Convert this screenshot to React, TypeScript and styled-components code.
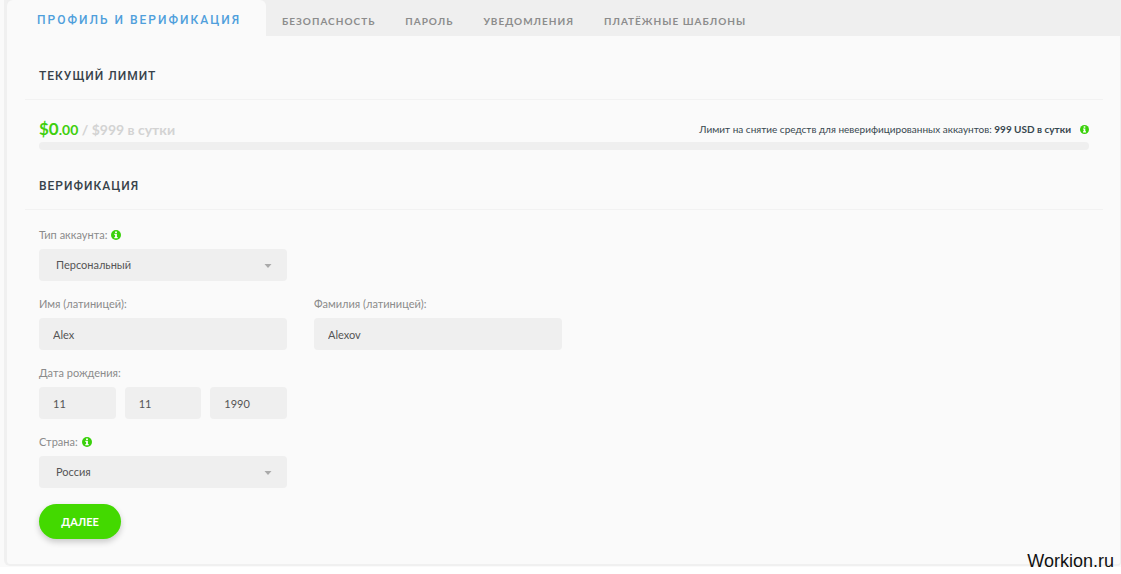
import React from "react";
import styled, { createGlobalStyle } from "styled-components";

const sans = 'Lato, "Noto Sans", sans-serif';
const display = 'Roboto, "Noto Sans", sans-serif';

const GlobalStyle = createGlobalStyle`
  *, *::before, *::after { box-sizing: border-box; }
  body { margin: 0; background: #fff; font-family: ${sans}; font-size: 11px; color: #37474f; }
`;

const Page = styled.div`
  position: relative;
  padding: 0 0 1px 4px;
  background: #fafafa;
`;

const Panel = styled.main`
  background: #fafafa;
  border: solid #f0f0f0;
  border-width: 0 1px 2px 3px;
  border-radius: 0 0 4px 6px;
  padding-bottom: 25px;
`;

const Tabs = styled.nav`
  display: flex;
  align-items: stretch;
  height: 36px;
  background: #efefef;
`;

const Tab = styled.a<{ $active?: boolean }>`
  display: flex;
  align-items: center;
  padding: ${p => (p.$active ? "4px 25px 0 30px" : "5px 15px 0")};
  margin-right: ${p => (p.$active ? "1px" : "0")};
  border-radius: ${p => (p.$active ? "6px 6px 0 0" : "0")};
  background: ${p => (p.$active ? "#fafafa" : "transparent")};
  color: ${p => (p.$active ? "#4f9fdc" : "#8c8c8c")};
  font: ${p => (p.$active ? `500 12px/16px ${display}` : `700 10px/16px ${sans}`)};
  letter-spacing: ${p => (p.$active ? "2px" : "1px")};
  text-decoration: none;
  white-space: nowrap;
`;

const Heading = styled.h2<{ $first?: boolean }>`
  margin: 0 17px 0 18px;
  padding: ${p => (p.$first ? "32px" : "28px")} 14px 15px;
  border-bottom: 1px solid #f2f2f2;
  font: 500 12px/16px ${display};
  letter-spacing: 1px;
  color: #37424a;
`;

const Section = styled.section`padding: 0 31px 0 32px;`;

const LimitRow = styled.div`
  display: flex;
  justify-content: space-between;
  align-items: center;
  padding-top: 17px;
  height: 42px;
`;

const Amount = styled.div`
  font: 700 14px/20px ${sans};
  color: #d3d3d3;
`;
const Used = styled.strong`font-weight: 700; color: #3fcf0e;`;
const Big = styled.span`font-size: 17px;`;

const Note = styled.div`
  display: flex;
  align-items: center;
  gap: 9px;
  padding-bottom: 1px;
  font: 400 10px/16px ${sans};
`;

const Bar = styled.div`height: 8px; border-radius: 4px; background: #efefef;`;

const Form = styled.form`
  display: grid;
  grid-template-columns: 248px 248px;
  column-gap: 27px;
  row-gap: 15px;
  padding: 17px 0 0 32px;
`;

const Field = styled.div`grid-column-start: 1;`;
const SideField = styled.div``;

const Label = styled.label`
  display: flex;
  align-items: center;
  gap: 4px;
  height: 16px;
  margin-bottom: 6px;
  font: 400 11px/16px ${sans};
  color: #8b8b8b;
`;

const Input = styled.input`
  display: block;
  width: 100%;
  height: 32px;
  padding: 0 14px;
  border: 0;
  border-radius: 4px;
  background: #efefef;
  color: #555;
  font: 400 11px/16px ${sans};
`;

const SelectBox = styled.div`position: relative;`;
const Select = styled.select`
  appearance: none;
  display: block;
  width: 100%;
  height: 32px;
  padding: 0 17px;
  border: 0;
  border-radius: 4px;
  background: #efefef;
  color: #555;
  font: 400 11px/16px ${sans};
`;
const Caret = styled.svg`position: absolute; right: 15px; top: 15px; pointer-events: none;`;

const DateGroup = styled.div`display: grid; grid-template-columns: repeat(3, 1fr); gap: 9px;`;

const Submit = styled.button`
  grid-column-start: 1;
  justify-self: start;
  width: 82px;
  height: 35px;
  margin-top: 1px;
  border: 0;
  border-radius: 18px;
  background: #43d900;
  box-shadow: 0 3px 6px rgba(0, 0, 0, 0.2);
  color: #fff;
  font: 700 11px/16px ${sans};
`;

const Watermark = styled.div`
  position: absolute;
  right: 7px;
  bottom: -4px;
  font: 400 18px/20px "Liberation Sans", sans-serif;
  color: #111;
`;

const InfoIcon = ({ size }: { size: number }) => (
  <svg width={size} height={size} viewBox="0 0 12 12" aria-hidden="true">
    <circle cx="6" cy="6" r="6" fill="#3ad10b" />
    <path d="M4.9 1.8h2.2v1.8H4.9zM4 4.5h3.1v3.9H8v1.5H4V8.4h.9V6H4z" fill="#fff" />
  </svg>
);

const Arrow = () => (
  <Caret width="8" height="5" viewBox="0 0 8 5" aria-hidden="true">
    <path d="M.5 0h7L4 4z" fill="#aaa" />
  </Caret>
);

export default function App() {
  return (
    <Page>
      <GlobalStyle />
      <Panel>
        <Tabs>
          <Tab href="#profile" $active>ПРОФИЛЬ И ВЕРИФИКАЦИЯ</Tab>
          <Tab href="#security">БЕЗОПАСНОСТЬ</Tab>
          <Tab href="#password">ПАРОЛЬ</Tab>
          <Tab href="#notifications">УВЕДОМЛЕНИЯ</Tab>
          <Tab href="#templates">ПЛАТЁЖНЫЕ ШАБЛОНЫ</Tab>
        </Tabs>
        <Heading $first>ТЕКУЩИЙ ЛИМИТ</Heading>
        <Section>
          <LimitRow>
            <Amount><Used><Big>$0</Big>.00</Used> / $999 в сутки</Amount>
            <Note>
              <span>Лимит на снятие средств для неверифицированных аккаунтов: <b>999 USD в сутки</b></span>
              <InfoIcon size={9} />
            </Note>
          </LimitRow>
          <Bar />
        </Section>
        <Heading>ВЕРИФИКАЦИЯ</Heading>
        <Form>
          <Field>
            <Label htmlFor="type">Тип аккаунта: <InfoIcon size={10} /></Label>
            <SelectBox>
              <Select id="type"><option>Персональный</option></Select>
              <Arrow />
            </SelectBox>
          </Field>
          <Field>
            <Label htmlFor="first">Имя (латиницей):</Label>
            <Input id="first" defaultValue="Alex" />
          </Field>
          <SideField>
            <Label htmlFor="last">Фамилия (латиницей):</Label>
            <Input id="last" defaultValue="Alexov" />
          </SideField>
          <Field>
            <Label htmlFor="day">Дата рождения:</Label>
            <DateGroup>
              <Input id="day" aria-label="День" defaultValue="11" />
              <Input aria-label="Месяц" defaultValue="11" />
              <Input aria-label="Год" defaultValue="1990" />
            </DateGroup>
          </Field>
          <Field>
            <Label htmlFor="country">Страна: <InfoIcon size={10} /></Label>
            <SelectBox>
              <Select id="country"><option>Россия</option></Select>
              <Arrow />
            </SelectBox>
          </Field>
          <Submit type="button">ДАЛЕЕ</Submit>
        </Form>
      </Panel>
      <Watermark>Workion.ru</Watermark>
    </Page>
  );
}
